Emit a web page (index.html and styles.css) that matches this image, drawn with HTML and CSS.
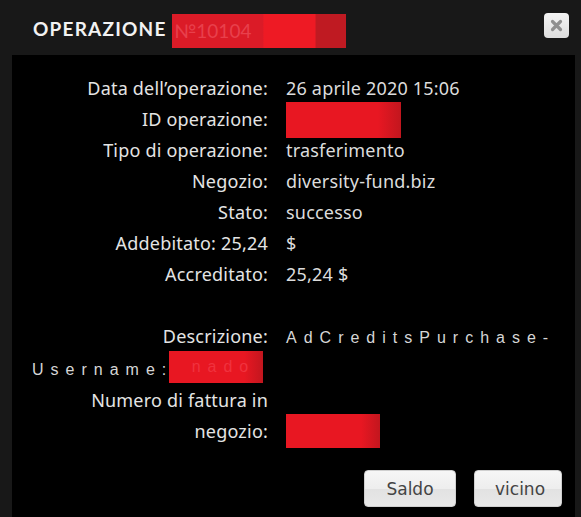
FILE: index.html
```html
<!DOCTYPE html>
<html>
<head>
    <title>Operazione</title>
    <link rel="stylesheet" href="styles.css">
</head>
<body>
    <div class="dialog">
        <div class="titlebar">
            <h1 class="title">Operazione <span class="redact title-redact">№10104</span></h1>
            <button class="close" title="Chiudi">
                <svg width="13" height="13" viewBox="0 0 13 13"><path d="M2.5 2.5 L10.5 10.5 M10.5 2.5 L2.5 10.5" stroke="#8f8f8f" stroke-width="3.2" stroke-linecap="round"/></svg>
            </button>
        </div>

        <div class="content">
            <div class="row"><span class="label">Data dell’operazione:</span><span class="value">26 aprile 2020 15:06</span></div>
            <div class="row"><span class="label">ID operazione:</span><span class="redact id-redact"></span></div>
            <div class="row"><span class="label">Tipo di operazione:</span><span class="value">trasferimento</span></div>
            <div class="row"><span class="label">Negozio:</span><span class="value">diversity-fund.biz</span></div>
            <div class="row"><span class="label">Stato:</span><span class="value">successo</span></div>
            <div class="row"><span class="label">Addebitato: 25,24</span><span class="value">$</span></div>
            <div class="row"><span class="label">Accreditato:</span><span class="value">25,24 $</span></div>
            <div class="row empty"></div>
            <div class="row"><span class="label">Descrizione:</span><span class="desc">AdCreditsPurchase-Username:<span class="redact user-redact">nado</span></span></div>
            <div class="row"><span class="label">Numero di fattura in negozio:</span><span class="redact shop-redact"></span></div>

            <div class="actions">
                <button class="button">Saldo</button>
                <button class="button">vicino</button>
            </div>
        </div>
    </div>
</body>
</html>
```

FILE: styles.css
```css
html, body { margin: 0; height: 100%; }
body { background: #181818; font-family: "Noto Sans", sans-serif; }

.dialog { display: flex; flex-direction: column; min-height: 100%; }

.titlebar {
    height: 55px; flex: none; box-sizing: border-box;
    display: flex; align-items: center; justify-content: space-between;
    padding: 2px 12px 0 33px;
}
.title {
    margin: 0; font-family: Lato, sans-serif; font-size: 19px; font-weight: 700;
    text-transform: uppercase; letter-spacing: 1.2px; color: #f2f2f2;
}
.close {
    width: 25px; height: 25px; padding: 0; margin-top: -6px;
    display: flex; align-items: center; justify-content: center;
    border: none; border-radius: 4px;
    background: linear-gradient(#f4f4f4, #dedede);
}

.content {
    flex: 1; background: #000;
    margin: 0 6px 0 12px; padding: 18px 13px 0 20px;
}
.row { line-height: 31px; min-height: 31px; font-size: 18px; letter-spacing: 0.2px; color: #dedede; }
.label {
    display: inline-block; width: 236px; margin-right: 18px;
    text-align: right; color: #e4e4e4;
}
.value { color: #dcdcdc; }
.desc {
    font-family: "Liberation Sans", Arial, sans-serif; font-size: 16px;
    letter-spacing: 7px; color: #d6d6d6;
}

.redact {
    display: inline-block; vertical-align: middle;
    background: linear-gradient(90deg, #e81722 80%, #c2161e 100%);
    margin: -10px 0; position: relative;
}
.title-redact {
    width: 174px; height: 34px; line-height: 34px; top: 0;
    color: #e8404c; letter-spacing: 0; font-weight: 400; padding-left: 2px; box-sizing: border-box;
    background: linear-gradient(90deg, #db1b27 52%, #ee1a24 53%, #ee1a24 82%, #bf1a22 83%);
}
.id-redact { width: 115px; height: 36px; top: -1px; }
.user-redact {
    width: 94px; height: 32px; line-height: 32px; top: -4px; margin-left: -4px;
    color: #f0323e; letter-spacing: 7px; text-align: right; padding-right: 8px; box-sizing: border-box;
}
.shop-redact { width: 94px; height: 34px; top: -2px; }

.actions {
    display: flex; justify-content: flex-end; gap: 18px;
    margin-top: 23px;
}
.button {
    height: 37px; padding: 0 20px;
    font-family: "DejaVu Sans", Verdana, sans-serif; font-size: 17px; color: #444;
    border: 1px solid #cfcfcf; border-radius: 4px;
    background: linear-gradient(#f6f6f6, #eeeeee 50%, #e2e2e2 51%, #e8e8e8);
}
.button:first-child { width: 92px; }
.button:last-child { width: 88px; }
```
